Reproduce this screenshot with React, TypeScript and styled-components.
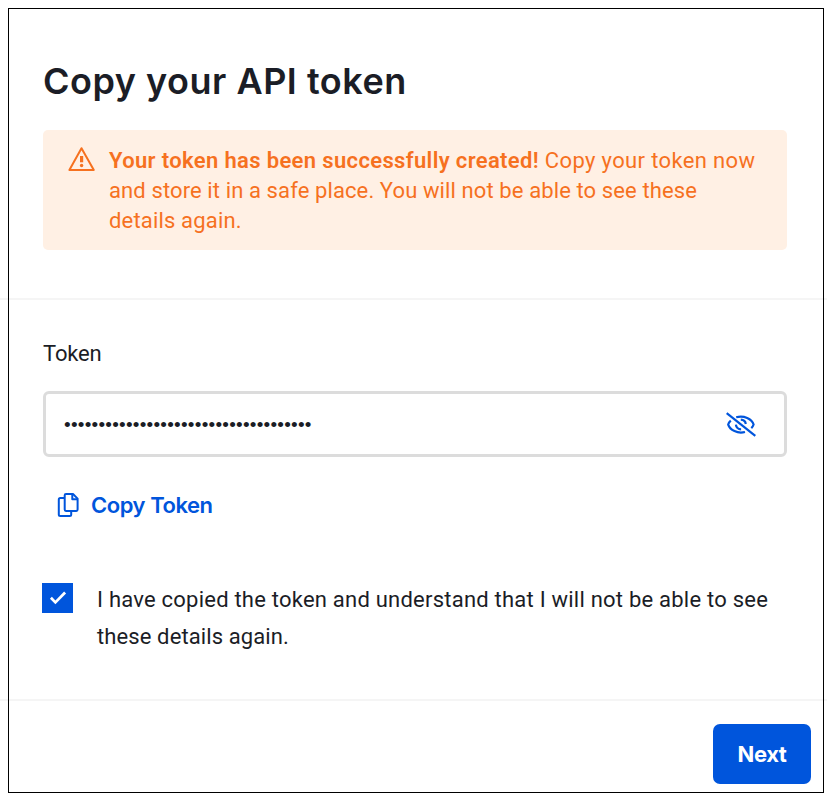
import React from 'react';
import styled, { createGlobalStyle } from 'styled-components';

const GlobalStyle = createGlobalStyle`
  *, *::before, *::after { box-sizing: border-box; }
  body { margin: 0; background: #fff; overflow: hidden; }
`;

const bodyFont = 'Roboto, "Liberation Sans", sans-serif';
const displayFont = 'Inter, "Liberation Sans", sans-serif';
const blue = '#0055dc';
const ink = '#1b1d26';
const orange = '#f6711f';

const Page = styled.main`
  position: relative;
  display: flex;
  flex-direction: column;
  width: 827px;
  height: 800px;
  color: ${ink};
  font: 400 22px/30px ${bodyFont};

  &::after {
    content: '';
    position: absolute;
    inset: 8px 3px 7px 8px;
    border: 1px solid #000;
    pointer-events: none;
  }
`;

const Section = styled.section<{ $height: number }>`
  display: flex;
  flex-direction: column;
  flex: none;
  height: ${(p) => p.$height}px;
  padding: 0 40px 0 43px;
  border-bottom: 2px solid #f5f5f5;
`;

const Title = styled.h1`
  margin: 61px 0 29px;
  font: 600 36px/40px ${displayFont};
  letter-spacing: 0.51px;
`;

const Alert = styled.div`
  display: flex;
  height: 120px;
  padding: 16px 0 0 25px;
  border-radius: 5px;
  background: #fff0e4;
  color: ${orange};
`;

const AlertIcon = styled.svg`
  flex: none;
  width: 28px;
  height: 26px;
  margin: 0 13px 0 0;
`;

const Line = styled.span<{ $spacing: number }>`
  display: block;
  white-space: nowrap;
  letter-spacing: ${(p) => p.$spacing}px;
`;

const Strong = styled.strong`
  font-weight: 600;
`;

const Label = styled.label`
  margin-top: 39px;
  letter-spacing: -0.15px;
`;

const TokenField = styled.div`
  display: flex;
  align-items: center;
  justify-content: space-between;
  height: 66px;
  margin-top: 22px;
  padding: 1px 27px 0 18px;
  border: 3px solid #dcdcdc;
  border-radius: 6px;
`;

const Dots = styled.span`
  padding-top: 1px;
  font: 400 19px/24px "Liberation Sans", sans-serif;
  letter-spacing: 0.23px;
`;

const IconButton = styled.button`
  display: flex;
  padding: 0;
  border: 0;
  background: none;
  color: ${blue};
`;

const CopyButton = styled(IconButton)`
  align-items: center;
  align-self: flex-start;
  gap: 12px;
  margin: 33px 0 0 14px;
  font: 600 22px/30px ${displayFont};
  letter-spacing: -0.45px;
`;

const Confirm = styled.div`
  display: flex;
  gap: 24px;
  margin-top: 61px;
  line-height: 37px;
`;

const Checkbox = styled.span`
  flex: none;
  width: 31px;
  height: 30px;
  margin: 2px 0 0 -1px;
  background: ${blue};
`;

const Footer = styled.footer`
  display: flex;
  justify-content: flex-end;
  padding: 23px 16px 0 0;
`;

const NextButton = styled.button`
  width: 98px;
  height: 60px;
  padding: 0;
  border: 0;
  border-radius: 7px;
  background: ${blue};
  color: #fff;
  font: 700 22px/30px ${displayFont};
  letter-spacing: -0.4px;
`;

const WarningIcon = () => (
  <AlertIcon viewBox="0 0 28 26" fill="none" stroke="currentColor" strokeWidth="2" strokeLinejoin="round">
    <path d="M13.5 2.2 25.8 23.9H1.4Z" />
    <path d="M13.6 10v6.3" strokeWidth="3.2" />
    <circle cx="13.6" cy="19.5" r="1.7" fill="currentColor" stroke="none" />
  </AlertIcon>
);

const EyeOffIcon = () => (
  <svg width="32" height="26" viewBox="0 0 32 26" fill="none" stroke="currentColor" strokeWidth="2.2">
    <path d="M1.7 1.2 30.3 23.8" />
    <path d="M11.2 5.2C19 3 26.9 6.8 28.6 12.5c-.5 1.5-1.2 2.6-2.3 3.6" />
    <path d="M5.8 8.7C4.5 9.8 3.6 11 3.2 12.6 5 18.2 12.5 21.9 20 20" />
    <path d="M15.8 7.7c2.6.1 4.7 1.9 5 4.3" />
    <path d="M10.900 12.6c.2 2.7 2.3 4.7 5.2 4.7" />
  </svg>
);

const CopyIcon = () => (
  <svg width="22" height="26" viewBox="0 0 22 26" fill="none" stroke="currentColor" strokeWidth="2" strokeLinejoin="round">
    <path d="M7.5 6H3.3Q1.8 6 1.8 7.5v14.9q0 1.5 1.5 1.5h9.4q1.5 0 1.5-1.5V19" />
    <path d="M9 2h7l4.600 4.600v11q0 1.300-1.300 1.300H9q-1.300 0-1.300-1.300V3.300Q7.700 2 9 2Z" />
    <path d="M15.3 2.5v4.8h5" />
  </svg>
);

const CheckIcon = () => (
  <svg width="31" height="30" viewBox="0 0 31 30" fill="none" stroke="#fff" strokeWidth="2.7" display="block">
    <path d="m8.9 14.800 4.500 4.600L23.100 9.500" />
  </svg>
);

export default function App() {
  return (
    <>
      <GlobalStyle />
      <Page>
        <Section $height={300}>
          <Title>Copy your API token</Title>
          <Alert>
            <WarningIcon />
            <div>
              <Line $spacing={0.355}>
                <Strong>Your token has been successfully created!</Strong> Copy your token now
              </Line>
              <Line $spacing={0.11}>and store it in a safe place. You will not be able to see these</Line>
              <Line $spacing={0.17}>details again.</Line>
            </div>
          </Alert>
        </Section>
        <Section $height={401}>
          <Label>Token</Label>
          <TokenField>
            <Dots>{'•'.repeat(36)}</Dots>
            <IconButton aria-label="Show token">
              <EyeOffIcon />
            </IconButton>
          </TokenField>
          <CopyButton>
            <CopyIcon />
            Copy Token
          </CopyButton>
          <Confirm>
            <Checkbox role="checkbox" aria-checked="true">
              <CheckIcon />
            </Checkbox>
            <div>
              <Line $spacing={0.225}>I have copied the token and understand that I will not be able to see</Line>
              <Line $spacing={0.11}>these details again.</Line>
            </div>
          </Confirm>
        </Section>
        <Footer>
          <NextButton>Next</NextButton>
        </Footer>
      </Page>
    </>
  );
}
